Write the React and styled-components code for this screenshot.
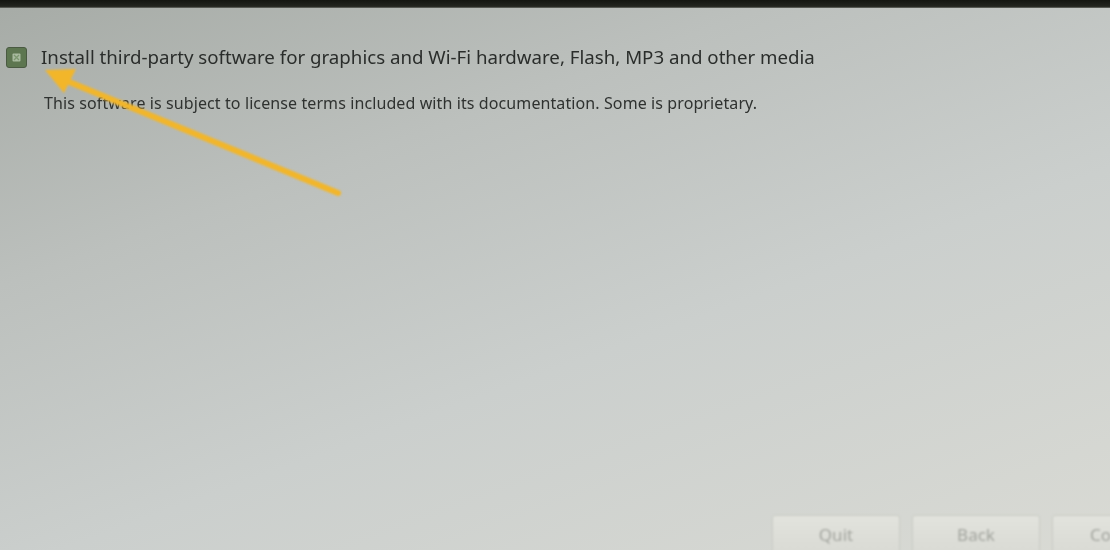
import React from "react";
import styled, { createGlobalStyle } from "styled-components";

const Global = createGlobalStyle`
  html, body { margin: 0; padding: 0; }
  body { width: 1110px; height: 550px; overflow: hidden; font-family: "Noto Sans", "Open Sans", sans-serif; }
`;

const Screen = styled.div`
  position: relative;
  width: 1110px;
  height: 550px;
  overflow: hidden;
  display: flex;
  flex-direction: column;
  background: linear-gradient(160deg, #a6aba6 0%, #bcc0bd 30%, #cbcfcd 60%, #d9dad4 100%);
`;

const TopBezel = styled.div`
  height: 8px;
  flex: none;
  background: linear-gradient(180deg, #141611 0%, #23251f 80%, #6d706a 100%);
`;

const Content = styled.div`
  flex: 1;
  display: flex;
  flex-direction: column;
  padding: 36px 0 0 6px;
`;

const OptionRow = styled.div`
  display: flex;
  align-items: center;
  gap: 14px;
`;

const Checkbox = styled.div`
  width: 21px;
  height: 21px;
  flex: none;
  box-sizing: border-box;
  border-radius: 3px;
  background: #5d7650;
  border: 1px solid #4a5a42;
  display: flex;
  align-items: center;
  justify-content: center;
  filter: blur(0.6px);
`;

const Title = styled.div`
  font-size: 18.7px;
  line-height: 26px;
  color: #2a2d2b;
  filter: blur(0.6px);
`;

const Description = styled.div`
  margin: 22px 0 0 38px;
  font-size: 16px;
  line-height: 22px;
  letter-spacing: 0.1px;
  color: #2f3230;
  filter: blur(0.6px);
`;

const Spacer = styled.div`
  flex: 1;
`;

const ButtonBar = styled.div`
  display: flex;
  gap: 12px;
  padding-left: 766px;
  margin-bottom: -5px;
`;

const Button = styled.div`
  width: ${(p) => p.w || 128}px;
  height: 40px;
  flex: none;
  box-sizing: border-box;
  border: 1px solid #c9cbc4;
  border-radius: 3px;
  background: linear-gradient(180deg, #e2e3dd 0%, #d9dad4 100%);
  color: #a2a49e;
  font-size: 17px;
  line-height: 23px;
  white-space: nowrap;
  overflow: hidden;
  display: flex;
  align-items: flex-start;
  justify-content: ${(p) => (p.left ? "flex-start" : "center")};
  padding: 7px 0 0 ${(p) => (p.left ? 37 : 0)}px;
  filter: blur(0.8px);
`;

const ArrowOverlay = styled.svg`
  position: absolute;
  left: 0;
  top: 0;
  pointer-events: none;
`;

export default function App() {
  return (
    <Screen>
      <Global />
      <TopBezel />
      <Content>
        <OptionRow>
          <Checkbox>
            <svg width="11" height="11" viewBox="0 0 11 11">
              <rect x="1.5" y="1.5" width="8" height="8" rx="1" fill="#b6c8ae" opacity="0.85" />
              <path d="M3 3 L8 8 M8 3 L3 8" stroke="#7c976f" strokeWidth="1.3" />
            </svg>
          </Checkbox>
          <Title>Install third-party software for graphics and Wi-Fi hardware, Flash, MP3 and other media</Title>
        </OptionRow>
        <Description>This software is subject to license terms included with its documentation. Some is proprietary.</Description>
        <Spacer />
        <ButtonBar>
          <Button w={128}>Quit</Button>
          <Button w={128}>Back</Button>
          <Button w={128} left>Continue</Button>
        </ButtonBar>
      </Content>
      <ArrowOverlay width="1110" height="550" viewBox="0 0 1110 550">
        <defs>
          <filter id="soft">
            <feGaussianBlur stdDeviation="0.8" />
          </filter>
        </defs>
        <g filter="url(#soft)">
          <line x1="338" y1="193" x2="62" y2="79" stroke="#f2b62c" strokeWidth="6" strokeLinecap="round" />
          <polygon points="45,70 76,69 64,93" fill="#f2b62c" />
        </g>
      </ArrowOverlay>
    </Screen>
  );
}
